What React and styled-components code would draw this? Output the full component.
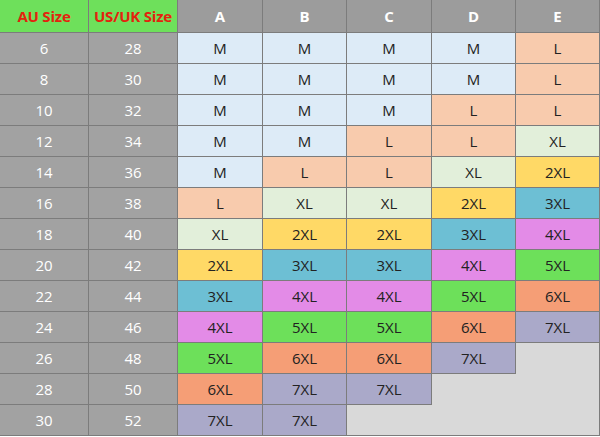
import React from 'react';
import styled, { createGlobalStyle } from 'styled-components';

const GlobalStyle = createGlobalStyle`
  html, body {
    margin: 0;
    padding: 0;
    background: #ffffff;
  }
  body {
    font-family: "Open Sans", "Noto Sans", "DejaVu Sans", sans-serif;
  }
`;

const SIZE_COLORS = {
  M: '#ddebf7',
  L: '#f8cbad',
  XL: '#e2efda',
  '2XL': '#ffd966',
  '3XL': '#6dbfd4',
  '4XL': '#e38be7',
  '5XL': '#6de05a',
  '6XL': '#f59e76',
  '7XL': '#aaa9c9',
};

const ROWS = [
  [6, 28, ['M', 'M', 'M', 'M', 'L']],
  [8, 30, ['M', 'M', 'M', 'M', 'L']],
  [10, 32, ['M', 'M', 'M', 'L', 'L']],
  [12, 34, ['M', 'M', 'L', 'L', 'XL']],
  [14, 36, ['M', 'L', 'L', 'XL', '2XL']],
  [16, 38, ['L', 'XL', 'XL', '2XL', '3XL']],
  [18, 40, ['XL', '2XL', '2XL', '3XL', '4XL']],
  [20, 42, ['2XL', '3XL', '3XL', '4XL', '5XL']],
  [22, 44, ['3XL', '4XL', '4XL', '5XL', '6XL']],
  [24, 46, ['4XL', '5XL', '5XL', '6XL', '7XL']],
  [26, 48, ['5XL', '6XL', '6XL', '7XL', null]],
  [28, 50, ['6XL', '7XL', '7XL', null, null]],
  [30, 52, ['7XL', '7XL', null, null, null]],
];

const Chart = styled.div`
  display: grid;
  grid-template-columns: 89px 89px 85px 84px 85px 84px 84px;
  grid-template-rows: 33px repeat(13, 31px);
  width: 600px;
  height: 437px;
  box-sizing: border-box;
`;

const Cell = styled.div`
  box-sizing: border-box;
  display: flex;
  align-items: center;
  justify-content: center;
  padding-top: 1px;
  border-right: 1px solid #7c7c7c;
  border-bottom: 1px solid #7c7c7c;
  font-size: 15px;
  line-height: 1;
  white-space: nowrap;
`;

const KeyHead = styled(Cell)`
  background: #6ee05b;
  color: #e3230e;
  font-weight: 700;
  font-size: 15px;
  letter-spacing: -0.2px;
`;

const LetterHead = styled(Cell)`
  background: #9c9c9c;
  color: #ffffff;
  font-weight: 700;
  font-size: 15px;
`;

const KeyCell = styled(Cell)`
  background: #a2a2a2;
  color: #ffffff;
  font-size: 15px;
`;

const SizeCell = styled(Cell)`
  background: ${(p) => p.$bg};
  color: #222222;
`;

const EmptyCell = styled.div`
  box-sizing: border-box;
  background: #d9d9d9;
  border-right: ${(p) => (p.$lastCol ? '1px solid #7c7c7c' : 'none')};
  border-bottom: ${(p) => (p.$lastRow ? '1px solid #7c7c7c' : 'none')};
`;

const App = () => {
  return (
    <>
      <GlobalStyle />
      <Chart>
        <KeyHead>AU Size</KeyHead>
        <KeyHead>US/UK Size</KeyHead>
        {['A', 'B', 'C', 'D', 'E'].map((l) => (
          <LetterHead key={l}>{l}</LetterHead>
        ))}
        {ROWS.map(([au, us, sizes], r) => (
          <React.Fragment key={au}>
            <KeyCell>{au}</KeyCell>
            <KeyCell>{us}</KeyCell>
            {sizes.map((s, i) =>
              s ? (
                <SizeCell key={i} $bg={SIZE_COLORS[s]}>{s}</SizeCell>
              ) : (
                <EmptyCell key={i} $lastCol={i === 4} $lastRow={r === ROWS.length - 1} />
              )
            )}
          </React.Fragment>
        ))}
      </Chart>
    </>
  );
};

export default App;
